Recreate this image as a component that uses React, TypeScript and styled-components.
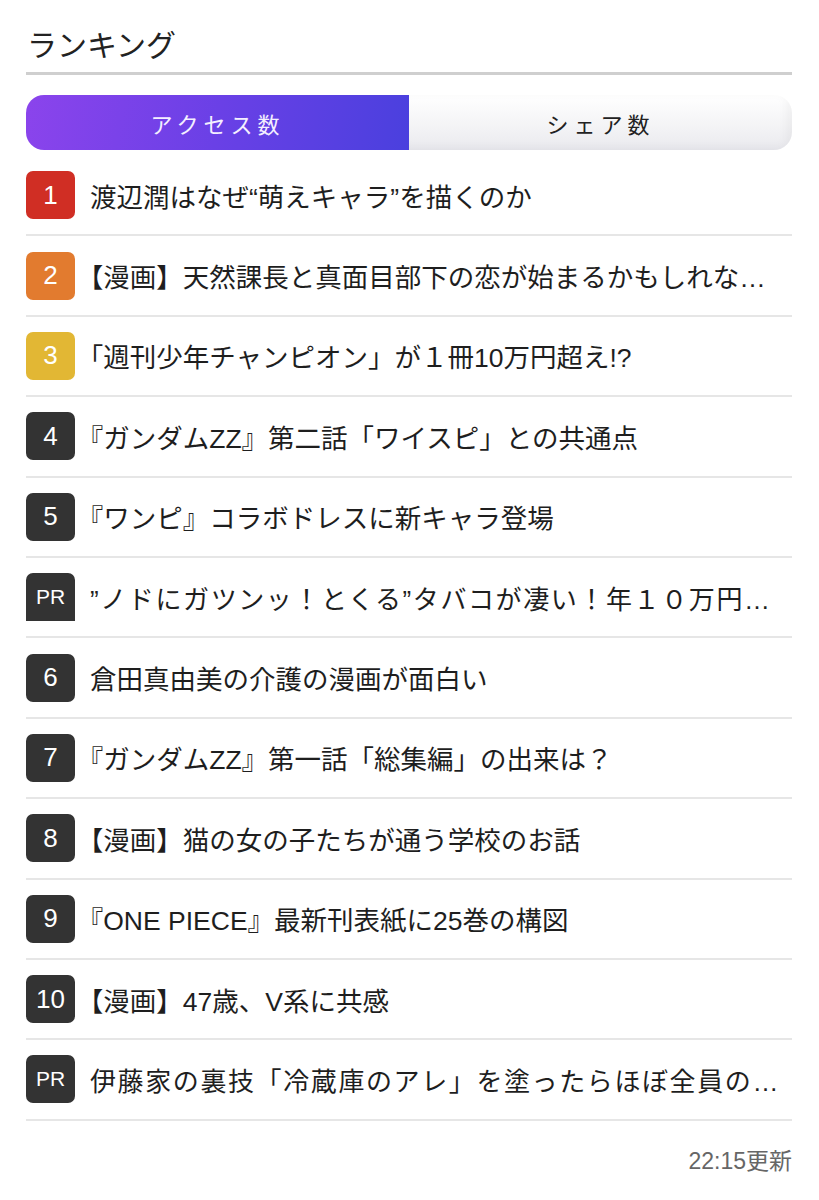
import React from "react";
import styled, { createGlobalStyle } from "styled-components";

const Global = createGlobalStyle`
  html, body { margin: 0; padding: 0; background: #fff; }
  body { font-family: "Liberation Sans", "Noto Sans CJK JP", sans-serif; color: #222; }
`;

const Page = styled.div`
  width: 819px;
  box-sizing: border-box;
  padding: 23px 27px 0 26px;
`;

const Title = styled.h2`
  margin: 0;
  padding: 0 0 8px 1px;
  font-family: "Noto Sans CJK JP", sans-serif;
  font-weight: 400;
  font-size: 30px;
  line-height: 41px;
  color: #222;
  border-bottom: 3px solid #cfcfcf;
`;

const Tabs = styled.div`
  display: grid;
  grid-template-columns: 1fr 1fr;
  height: 55px;
  margin-top: 20px;
  border-radius: 18px;
  overflow: hidden;
`;

const Tab = styled.div<{ $active?: boolean }>`
  display: flex;
  align-items: center;
  justify-content: center;
  font-family: "Noto Sans CJK JP", sans-serif;
  font-size: 22px;
  letter-spacing: 5px;
  color: ${(p) => (p.$active ? "#f4efff" : "#222")};
  background: ${(p) =>
    p.$active
      ? "linear-gradient(100deg, #8b44ec 0%, #6a40e6 50%, #4a40de 100%)"
      : "linear-gradient(180deg, #ffffff 0%, #f3f3f5 60%, #e9e9ee 100%)"};
  box-shadow: ${(p) => (p.$active ? "none" : "inset -6px -2px 10px rgba(0,0,0,0.04)")};
`;

const List = styled.ul`
  list-style: none;
  margin: 6px 0 0;
  padding: 0;
`;

const Row = styled.li`
  display: flex;
  align-items: center;
  height: 78.4px;
  border-bottom: 2px solid #e6e6e6;
`;

const Badge = styled.div<{ $color: string; $pr?: boolean; $cut?: boolean }>`
  flex: 0 0 49px;
  height: 48px;
  display: flex;
  align-items: center;
  justify-content: center;
  border-radius: ${(p) => (p.$cut ? "7px 7px 0 0" : "7px")};
  background: ${(p) => p.$color};
  color: #fff;
  font-family: "Liberation Sans", sans-serif;
  font-size: ${(p) => (p.$pr ? "21px" : "26px")};
  margin-right: 15px;
`;

const Text = styled.span<{ $pr?: boolean }>`
  flex: 1;
  min-width: 0;
  white-space: nowrap;
  overflow: hidden;
  text-overflow: ellipsis;
  font-size: ${(p) => (p.$pr ? "26px" : "26.5px")};
  letter-spacing: ${(p) => (p.$pr ? "1.6px" : "0")};
  text-spacing-trim: trim-start;
  color: #1e1e1e;
  padding-right: 12px;
`;

const Footer = styled.div`
  text-align: right;
  padding-top: 21px;
  font-size: 23px;
  color: #666;
`;

type Item = { label: string; text: string; color: string; pr?: boolean; cut?: boolean };

const items: Item[] = [
  { label: "1", text: "渡辺潤はなぜ“萌えキャラ”を描くのか", color: "#d02e24" },
  { label: "2", text: "【漫画】天然課長と真面目部下の恋が始まるかもしれない話", color: "#e27b2f" },
  { label: "3", text: "「週刊少年チャンピオン」が１冊10万円超え!?", color: "#e2b734" },
  { label: "4", text: "『ガンダムZZ』第二話「ワイスピ」との共通点", color: "#333" },
  { label: "5", text: "『ワンピ』コラボドレスに新キャラ登場", color: "#333" },
  { label: "PR", text: "”ノドにガツンッ！とくる”タバコが凄い！年１０万円節約", color: "#333", pr: true, cut: true },
  { label: "6", text: "倉田真由美の介護の漫画が面白い", color: "#333" },
  { label: "7", text: "『ガンダムZZ』第一話「総集編」の出来は？", color: "#333" },
  { label: "8", text: "【漫画】猫の女の子たちが通う学校のお話", color: "#333" },
  { label: "9", text: "『ONE PIECE』最新刊表紙に25巻の構図", color: "#333" },
  { label: "10", text: "【漫画】47歳、V系に共感", color: "#333" },
  { label: "PR", text: "伊藤家の裏技「冷蔵庫のアレ」を塗ったらほぼ全員の髪が", color: "#333", pr: true },
];

export default function App() {
  return (
    <Page>
      <Global />
      <Title>ランキング</Title>
      <Tabs>
        <Tab $active>アクセス数</Tab>
        <Tab>シェア数</Tab>
      </Tabs>
      <List>
        {items.map((it, i) => (
          <Row key={i}>
            <Badge $color={it.color} $pr={it.pr} $cut={it.cut}>
              {it.label}
            </Badge>
            <Text $pr={it.pr}>{it.text}</Text>
          </Row>
        ))}
      </List>
      <Footer>22:15更新</Footer>
    </Page>
  );
}
